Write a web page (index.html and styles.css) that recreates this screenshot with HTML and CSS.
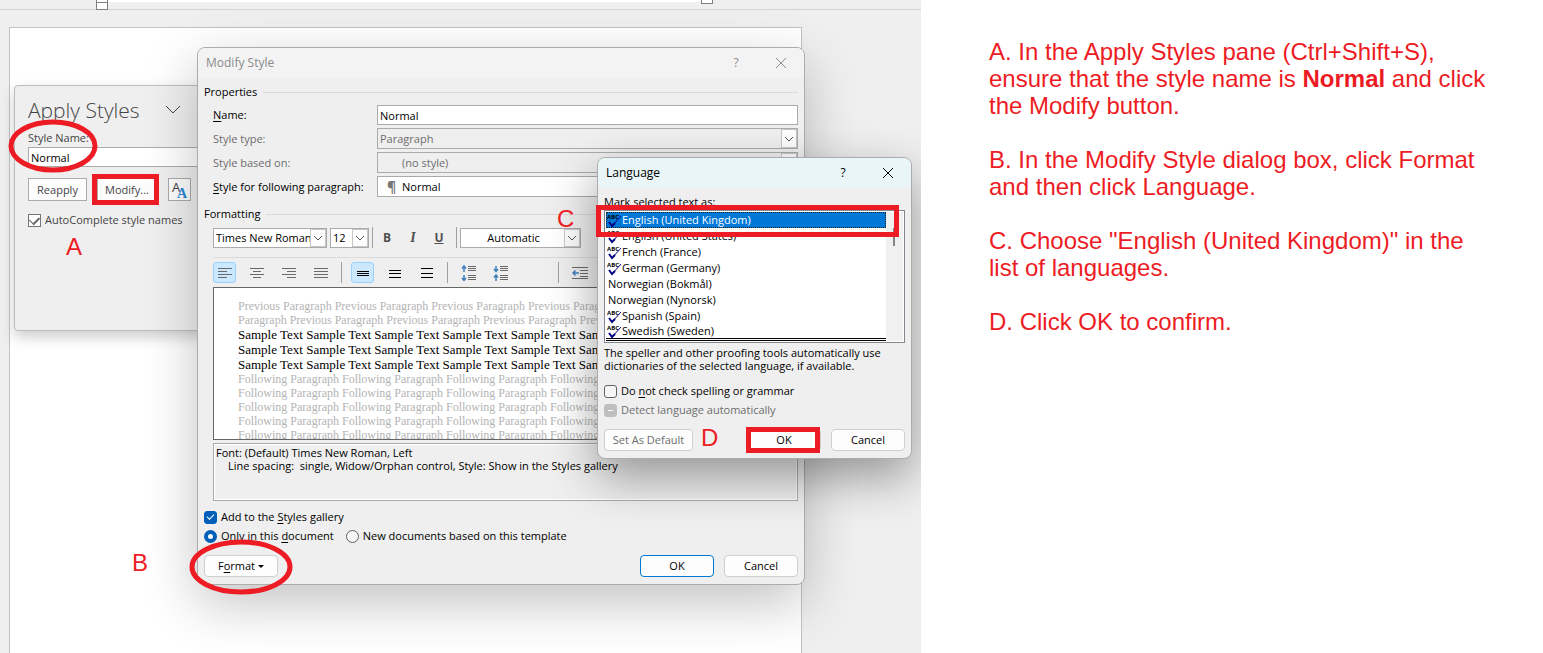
FILE: index.html
```html
<!DOCTYPE html>
<html lang="en">
<head>
    <meta charset="UTF-8">
    <meta name="viewport" content="width=device-width, initial-scale=1.0">
    <title>Modify Style - Language</title>
    <link rel="stylesheet" href="styles.css">
</head>
<body>
    <svg class="symbols" aria-hidden="true">
        <symbol id="chevron" viewBox="0 0 10 6"><path d="M1 1l4 4 4-4" fill="none" stroke="currentColor"/></symbol>
        <symbol id="chevron-wide" viewBox="0 0 16 10"><path d="M1 1l7 7 7-7" fill="none" stroke="currentColor"/></symbol>
        <symbol id="close" viewBox="0 0 12 12"><path d="M1 1l10 10M11 1L1 11" fill="none" stroke="currentColor"/></symbol>
        <symbol id="spell" viewBox="0 0 15 15">
            <text x="0" y="6" font-size="6" font-weight="bold" fill="#000">ABC</text>
            <path d="M5 13L14 3" fill="none" stroke="#000080"/>
            <path d="M2 9l3 4 3-3" fill="none" stroke="#000080" stroke-width="2"/>
        </symbol>
    </svg>

    <main class="desktop">
        <div class="slide-strip"></div>
        <div class="paper"></div>
        <span class="handle handle-left-top"></span>
        <span class="handle handle-left"></span>
        <span class="handle handle-right"></span>

        <section class="pane">
            <div class="pane-title">
                <h2>Apply Styles</h2>
                <svg class="pane-chevron"><use href="#chevron-wide"/></svg>
            </div>
            <label for="style_name">Style Name:</label>
            <input type="text" id="style_name" class="text-box" value="Normal">
            <div class="pane-buttons">
                <button type="button" class="flat-button reapply">Reapply</button>
                <button type="button" class="flat-button modify">Modify...</button>
                <button type="button" class="flat-button styles-button" aria-label="Styles">
                    <svg width="18" height="18" viewBox="0 0 18 18">
                        <text x="1" y="11" font-size="13" fill="#444">A</text>
                        <text x="6" y="17" font-size="14" fill="#2b88d8" class="serif-a">A</text>
                    </svg>
                </button>
            </div>
            <label class="check-line"><input type="checkbox" class="check-old" checked>AutoComplete style names</label>
        </section>

        <section class="window modify-window">
            <header class="title-bar">
                <span class="title">Modify Style</span>
                <button type="button" class="help">?</button>
                <button type="button" class="close" aria-label="Close"><svg><use href="#close"/></svg></button>
            </header>
            <div class="group-title">Properties</div>
            <div class="properties">
                <label for="name"><u>N</u>ame:</label>
                <input type="text" id="name" class="text-box" value="Normal">
                <label for="type" class="dim">Style type:</label>
                <span class="combo off"><select id="type" disabled><option>Paragraph</option></select><i><svg><use href="#chevron"/></svg></i></span>
                <label for="based" class="dim">Style based on:</label>
                <span class="combo off"><select id="based" class="indent" disabled><option>(no style)</option></select><i><svg><use href="#chevron"/></svg></i></span>
                <label for="following"><u>S</u>tyle for following paragraph:</label>
                <span class="combo"><b class="pilcrow">¶</b><select id="following"><option>Normal</option></select><i><svg><use href="#chevron"/></svg></i></span>
            </div>
            <div class="group-title">Formatting</div>
            <div class="font-bar">
                <span class="combo font-family"><select aria-label="Font"><option>Times New Roman</option></select><i><svg><use href="#chevron"/></svg></i></span>
                <span class="combo font-size"><select aria-label="Size"><option>12</option></select><i><svg><use href="#chevron"/></svg></i></span>
                <span class="separator"></span>
                <button type="button" class="letter bold">B</button>
                <button type="button" class="letter italic">I</button>
                <button type="button" class="letter underline">U</button>
                <span class="separator"></span>
                <span class="combo font-color"><select aria-label="Colour"><option>Automatic</option></select><i><svg><use href="#chevron"/></svg></i></span>
            </div>
            <div class="align-bar">
                <button type="button" class="tool on" aria-label="Left"><svg viewBox="0 0 16 12"><path d="M1 1.5h14M1 4.5h9M1 7.5h14M1 10.5h9"/></svg></button>
                <button type="button" class="tool" aria-label="Center"><svg viewBox="0 0 16 12"><path d="M1 1.5h14M4 4.5h8M1 7.5h14M4 10.5h8"/></svg></button>
                <button type="button" class="tool" aria-label="Right"><svg viewBox="0 0 16 12"><path d="M1 1.5h14M6 4.5h9M1 7.5h14M6 10.5h9"/></svg></button>
                <button type="button" class="tool" aria-label="Justify"><svg viewBox="0 0 16 12"><path d="M1 1.5h14M1 4.5h14M1 7.5h14M1 10.5h14"/></svg></button>
                <span class="separator"></span>
                <button type="button" class="tool on dark" aria-label="Single spacing"><svg viewBox="0 0 16 12"><path d="M2 4.5h12M2 6.5h12M2 8.5h12"/></svg></button>
                <button type="button" class="tool dark" aria-label="1.5 spacing"><svg viewBox="0 0 16 12"><path d="M2 3.5h12M2 6.5h12M2 10.5h12"/></svg></button>
                <button type="button" class="tool dark" aria-label="Double spacing"><svg viewBox="0 0 16 12"><path d="M2 1.5h12M2 6.5h12M2 10.5h12"/></svg></button>
                <span class="separator"></span>
                <button type="button" class="tool tall" aria-label="Increase spacing"><svg viewBox="0 0 16 16"><path d="M7 1.5h8M7 3.5h8M7 5.5h8M7 10.5h8M7 12.5h8M7 14.5h8"/><path class="arrow" d="M3 7V1M1 3.500l2-2.500 2 2.500M3 10v6M1 13l2 2.500 2-2.500"/></svg></button>
                <button type="button" class="tool tall" aria-label="Decrease spacing"><svg viewBox="0 0 16 16"><path d="M7 1.5h8M7 3.5h8M7 5.5h8M7 10.5h8M7 12.5h8M7 14.5h8"/><path class="arrow" d="M3 1v6M1 4l2 2.500L5 4M3 16v-6M1 12.500l2-2.500 2 2.500"/></svg></button>
                <span class="separator far"></span>
                <button type="button" class="tool" aria-label="Decrease indent"><svg viewBox="0 0 16 12"><path d="M0 .5h16M8 3.5h8M8 6.5h8M8 9.5h8M0 11.5h16"/><path class="arrow" d="M7 6H1M3.500 3.500L1 6l2.500 2.500"/></svg></button>
            </div>
            <div class="preview">
                <p>Previous Paragraph Previous Paragraph Previous Paragraph Previous Paragraph Previous<br>Paragraph Previous Paragraph Previous Paragraph Previous Paragraph Previous Paragraph</p>
                <p class="sample">Sample Text Sample Text Sample Text Sample Text Sample Text Sample Text<br>Sample Text Sample Text Sample Text Sample Text Sample Text Sample Text<br>Sample Text Sample Text Sample Text Sample Text Sample Text Sample Text</p>
                <p>Following Paragraph Following Paragraph Following Paragraph Following Paragraph<br>Following Paragraph Following Paragraph Following Paragraph Following Paragraph<br>Following Paragraph Following Paragraph Following Paragraph Following Paragraph<br>Following Paragraph Following Paragraph Following Paragraph Following Paragraph<br>Following Paragraph Following Paragraph Following Paragraph Following Paragraph</p>
            </div>
            <div class="description">
                <p>Font: (Default) Times New Roman, Left</p>
                <p class="second">Line spacing:&nbsp; single, Widow/Orphan control, Style: Show in the Styles gallery</p>
            </div>
            <div class="choices">
                <label><input type="checkbox" class="check" checked><span>Add to the <u>S</u>tyles gallery</span></label>
                <div class="radio-line">
                    <label><input type="radio" name="scope" class="radio" checked><span>Only in this <u>d</u>ocument</span></label>
                    <label><input type="radio" name="scope" class="radio"><span>New documents based on this template</span></label>
                </div>
            </div>
            <footer class="buttons">
                <button type="button" class="button"><span>F<u>o</u>rmat</span><span class="caret"></span></button>
                <span class="spacer"></span>
                <button type="button" class="button primary">OK</button>
                <button type="button" class="button">Cancel</button>
            </footer>
        </section>

        <section class="window language-window">
            <header class="title-bar">
                <span class="title">Language</span>
                <button type="button" class="help">?</button>
                <button type="button" class="close" aria-label="Close"><svg><use href="#close"/></svg></button>
            </header>
            <div class="list-label" id="mark_label">Mark selected text as:</div>
            <div class="list-box">
                <ul role="listbox" aria-labelledby="mark_label">
                    <li role="option" aria-selected="true" class="selected"><svg><use href="#spell"/></svg>English (United Kingdom)</li>
                    <li role="option"><svg><use href="#spell"/></svg>English (United States)</li>
                    <li role="option"><svg><use href="#spell"/></svg>French (France)</li>
                    <li role="option"><svg><use href="#spell"/></svg>German (Germany)</li>
                    <li role="option">Norwegian (Bokmål)</li>
                    <li role="option">Norwegian (Nynorsk)</li>
                    <li role="option"><svg><use href="#spell"/></svg>Spanish (Spain)</li>
                    <li role="option" class="last"><svg><use href="#spell"/></svg>Swedish (Sweden)</li>
                </ul>
                <div class="scroll"><span></span></div>
            </div>
            <p class="note">The speller and other proofing tools automatically use dictionaries of the selected language, if available.</p>
            <div class="choices">
                <label><input type="checkbox" class="check"><span>Do <u>n</u>ot check spelling or grammar</span></label>
                <label class="dim"><input type="checkbox" class="check mixed" disabled><span>Detect language automatically</span></label>
            </div>
            <footer class="buttons">
                <button type="button" class="button wide" disabled>Set As Default</button>
                <span class="spacer"></span>
                <button type="button" class="button">OK</button>
                <button type="button" class="button">Cancel</button>
            </footer>
        </section>

        <!-- red marks over the windows -->
        <svg class="marks" width="921" height="653">
            <ellipse cx="53" cy="146" rx="42" ry="24"/>
            <rect x="94.5" y="176.5" width="62" height="26"/>
            <ellipse cx="241" cy="567" rx="49" ry="25"/>
            <rect x="598.5" y="207.5" width="298" height="27"/>
            <rect x="748.5" y="429.5" width="69" height="21"/>
            <text x="66" y="255">A</text>
            <text x="132" y="571">B</text>
            <text x="557" y="227">C</text>
            <text x="701" y="446">D</text>
        </svg>
    </main>

    <aside class="instructions">
        <p>A. In the Apply Styles pane (Ctrl+Shift+S), ensure that the style name is <b>Normal</b> and click the Modify button.</p>
        <p>B. In the Modify Style dialog box, click Format and then click Language.</p>
        <p>C. Choose "English (United Kingdom)" in the list of languages.</p>
        <p>D. Click OK to confirm.</p>
    </aside>
</body>
</html>
```
FILE: styles.css
```css
* {
    box-sizing: border-box;
}
body {
    margin: 0;
    min-height: 100vh;
    display: flex;
    font-family: 'Open Sans', 'Noto Sans', sans-serif;
    font-size: 11px;
    line-height: 16px;
    color: #000;
    background: #fff;
}
p, h2, ul {
    margin: 0;
    padding: 0;
}
button, input, select {
    font: inherit;
    color: inherit;
    margin: 0;
}
button {
    padding: 0;
    border: none;
    background: none;
}
u {
    text-underline-offset: 2px;
}
.symbols {
    position: absolute;
    width: 0;
    height: 0;
}
.dim {
    color: #6d6d6d;
}

/* desktop */
.desktop {
    flex: 1;
    position: relative;
    overflow: hidden;
    background: #efefef;
}
.slide-strip {
    height: 10px;
    border-bottom: 1px solid #d2d2d2;
    background: linear-gradient(#fff, #fff) 102px 0 / 605px 2px no-repeat;
}
.handle {
    position: absolute;
    width: 12px;
    height: 8px;
    border: 1px solid #808080;
    background: #fff;
}
.handle-left-top {
    left: 96px;
    top: -5px;
}
.handle-left {
    left: 96px;
    top: 2px;
}
.handle-right {
    left: 701px;
    top: -4px;
}
.paper {
    position: absolute;
    left: 9px;
    right: 119px;
    top: 27px;
    bottom: 0;
    border: 1px solid #c3c3c3;
    border-bottom: none;
    background: #fff;
}

/* apply styles pane */
.pane {
    position: absolute;
    left: 14px;
    top: 85px;
    width: 260px;
    height: 246px;
    padding: 9px 13px;
    display: flex;
    flex-direction: column;
    color: #444;
    background: #efefef;
    border: 1px solid #bdbdbd;
    border-radius: 4px;
    box-shadow: 0 6px 14px rgba(0, 0, 0, 0.2);
}
.pane-title {
    display: flex;
    align-items: center;
    gap: 25px;
    height: 30px;
    margin-bottom: 5px;
}
.pane-title h2 {
    font-size: 21px;
    line-height: 30px;
    font-weight: 300;
}
.pane-chevron {
    width: 16px;
    height: 10px;
}
.text-box {
    height: 20px;
    padding: 0 2px;
    color: #000;
    background: #fff;
    border: 1px solid #ababab;
    border-radius: 0;
    outline: none;
}
.pane .text-box {
    margin-top: 1px;
}
.pane-buttons {
    display: flex;
    margin: 11px 0;
}
.flat-button {
    height: 23px;
    background: #fdfdfd;
    border: 1px solid #ababab;
}
.reapply {
    width: 59px;
}
.modify {
    width: 60px;
    margin: 0 11px 0 10px;
}
.styles-button {
    width: 23px;
}
.styles-button svg {
    display: block;
    margin: auto;
}
.serif-a {
    font-family: 'Liberation Serif', serif;
    font-weight: bold;
}
.check-line {
    display: flex;
    align-items: center;
    gap: 4px;
}

/* check boxes and radio buttons */
.check, .check-old, .radio {
    appearance: none;
    width: 13px;
    height: 13px;
    flex: none;
    display: grid;
    place-items: center;
    border: 1px solid #626262;
    border-radius: 3px;
    background: #f6f6f6;
}
.check-old {
    border-color: #767676;
    border-radius: 0;
    background: #fff;
}
.check:checked::before, .check-old:checked::before {
    content: "";
    width: 6px;
    height: 3px;
    margin-bottom: 2px;
    border-left: 1px solid #fff;
    border-bottom: 1px solid #fff;
    transform: rotate(-45deg);
}
.check-old:checked::before {
    width: 8px;
    height: 5px;
    border-color: #666;
    border-bottom-width: 2px;
}
.check:checked {
    background: #005fb8;
    border-color: #005fb8;
}
.check.mixed {
    background: #bfbfbf;
    border-color: #bfbfbf;
}
.check.mixed::before {
    content: "";
    width: 5px;
    height: 1px;
    background: #fff;
}
.radio {
    border-radius: 50%;
}
.radio:checked {
    border: 4px solid #005fb8;
    background: #fff;
}

/* windows */
.window {
    position: absolute;
    display: flex;
    flex-direction: column;
    padding: 0 6px 7px;
    background: #efefef;
    border: 1px solid #acacac;
    border-radius: 8px;
}
.modify-window {
    left: 197px;
    top: 47px;
    width: 608px;
    box-shadow: 0 18px 54px rgba(0, 0, 0, 0.24);
}
.language-window {
    left: 597px;
    top: 157px;
    width: 315px;
    box-shadow: 0 18px 48px rgba(0, 0, 0, 0.38);
}
.title-bar {
    display: flex;
    align-items: center;
    height: 29px;
    margin: 0 -6px;
    padding: 0 17px 0 8px;
    font-size: 12px;
    border-radius: 7px 7px 0 0;
    background: #f3f3f3;
}
.modify-window .title-bar {
    color: #8a8a8a;
}
.language-window .title-bar {
    background: #e9f5f7;
}
.title {
    flex: 1;
}
.help {
    width: 12px;
    margin-right: 33px;
}
.close svg {
    display: block;
    width: 12px;
    height: 12px;
}
.group-title {
    display: flex;
    align-items: center;
    gap: 6px;
    margin: 7px 0 5px;
}
.group-title::after {
    content: "";
    flex: 1;
    height: 1px;
    background: #dadada;
}
.properties {
    display: grid;
    grid-template-columns: 164px 1fr;
    grid-template-rows: 20px 21px 21px 21px;
    align-items: center;
    row-gap: 3px;
    padding-left: 9px;
}
.combo {
    display: flex;
    height: 21px;
    background: #fff;
    border: 1px solid #ababab;
}
.combo select {
    appearance: none;
    flex: 1;
    min-width: 0;
    padding: 0 0 0 2px;
    border: none;
    border-radius: 0;
    background: transparent;
    outline: none;
    opacity: 1;
}
.combo.off {
    color: #6d6d6d;
    background: #efefef;
}
.combo select.indent {
    padding-left: 24px;
}
.combo i {
    width: 16px;
    display: grid;
    place-items: center;
    color: #555;
    background: #fdfdfd;
    border: 1px solid #c6c6c6;
}
.combo svg {
    width: 10px;
    height: 6px;
}
.pilcrow {
    width: 22px;
    padding-left: 9px;
    line-height: 19px;
    font-size: 14px;
    color: #777;
}
.modify-window .properties + .group-title {
    margin-top: 9px;
}
.font-bar {
    display: flex;
    align-items: center;
    padding: 0 0 9px;
    margin-left: 9px;
    border-bottom: 1px solid #dadada;
}
.font-bar .combo {
    height: 20px;
}
.font-family {
    width: 114px;
}
.font-size {
    width: 39px;
    margin: 0 3px;
}
.font-color {
    width: 121px;
    margin-left: 3px;
    text-align: center;
}
.font-color select {
    text-align-last: center;
}
.separator {
    width: 1px;
    height: 21px;
    background: #a0a0a0;
}
.letter {
    width: 26px;
    height: 20px;
    font-size: 12px;
    font-weight: bold;
    color: #505050;
}
.letter.bold {
    margin-left: 1px;
}
.letter.underline {
    margin-right: 4px;
    text-decoration: underline;
}
.letter.italic {
    font-family: 'Liberation Serif', serif;
    font-size: 14px;
    font-style: italic;
}
.align-bar {
    display: flex;
    gap: 9px;
    margin: 4px 0 4px 9px;
    overflow: hidden;
}
.tool {
    flex: none;
    width: 23px;
    height: 21px;
    display: grid;
    place-items: center;
    border: 1px solid transparent;
    border-radius: 3px;
}
.tool.on {
    background: #cce8ff;
    border-color: #99d1ff;
}
.tool svg {
    width: 16px;
    height: 12px;
    fill: none;
    stroke: #6a6a6a;
    shape-rendering: crispEdges;
}
.tool.dark svg {
    stroke: #000;
}
.tool.tall svg {
    height: 16px;
}
.tool .arrow {
    stroke: #3f7fbf;
    stroke-width: 1.5;
    shape-rendering: auto;
}
.separator.far {
    margin-left: 37px;
}
.preview {
    height: 153px;
    margin-left: 9px;
    padding: 11px 24px 0;
    overflow: hidden;
    white-space: nowrap;
    font-family: 'Liberation Serif', serif;
    font-size: 12px;
    line-height: 14px;
    color: #b4b4b4;
    background: #fff;
    border: 1px solid #666;
}
.preview .sample {
    font-size: 13px;
    line-height: 15px;
    color: #000;
}
.description {
    height: 58px;
    margin: 3px 0 0 9px;
    padding: 2px;
    line-height: 13px;
    border: 1px solid #ababab;
    box-shadow: inset 0 0 0 1px #fff;
}
.description .second {
    padding-left: 12px;
}
.choices {
    display: flex;
    flex-direction: column;
    gap: 3px;
    margin-top: 8px;
}
.choices label {
    display: flex;
    align-items: center;
    gap: 4px;
}
.radio-line {
    display: flex;
    gap: 12px;
}
.buttons {
    display: flex;
    gap: 10px;
    margin-top: 11px;
}
.spacer {
    flex: 1;
}
.button {
    width: 74px;
    height: 22px;
    display: flex;
    align-items: center;
    justify-content: center;
    gap: 3px;
    background: #fdfdfd;
    border: 1px solid #cfcfcf;
    border-radius: 4px;
}
.button.wide {
    width: 89px;
}
.button:disabled {
    color: #6d6d6d;
}
.button.primary {
    border-color: #0078d4;
}
.caret {
    border: 3px solid transparent;
    border-top-color: #000;
    border-bottom: none;
}

/* language list */
.list-label {
    margin-top: 7px;
}
.list-box {
    display: flex;
    height: 133px;
    padding: 1px;
    background: #fff;
    border: 1px solid #828790;
    overflow: hidden;
}
.list-box ul {
    flex: 1;
    list-style: none;
}
.list-box li {
    display: flex;
    align-items: center;
    height: 16px;
    padding-left: 2px;
}
.list-box li svg {
    width: 15px;
    height: 15px;
    margin-left: -1px;
}
.list-box .selected {
    color: #fff;
    background: #0078d7;
    outline: 1px dotted #222;
    outline-offset: -1px;
}
.list-box .last {
    height: 17px;
    border-bottom: 3px double #000;
}
.scroll {
    width: 17px;
    padding: 16px 7px 0;
    background: #f0f0f0;
}
.scroll span {
    display: block;
    width: 2px;
    height: 18px;
    background: #858585;
}
.note {
    margin-top: 3px;
    line-height: 13px;
}
.language-window .choices {
    margin-top: 11px;
}

/* annotations */
.marks {
    position: absolute;
    left: 0;
    top: 0;
    pointer-events: none;
    font-family: 'Liberation Sans', Arial, sans-serif;
    font-size: 24px;
    fill: none;
    stroke: #ed1c24;
    stroke-width: 5;
}
.marks text {
    fill: #ed1c24;
    stroke: none;
}
.instructions {
    width: 622px;
    padding: 38px 48px 0 68px;
    display: flex;
    flex-direction: column;
    gap: 27px;
    font-family: 'Liberation Sans', Arial, sans-serif;
    font-size: 24px;
    line-height: 27px;
    color: #ed1c24;
}
```
